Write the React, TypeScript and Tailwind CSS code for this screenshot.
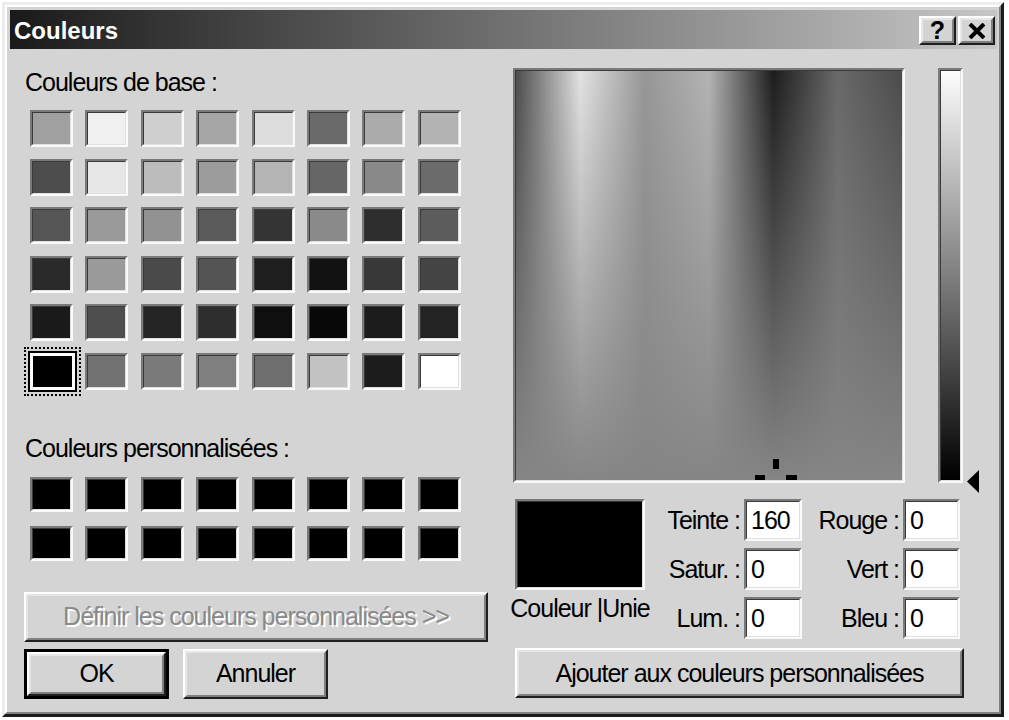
import type { ReactNode } from 'react'

const baseColors = [
  '#a0a0a0', '#f0f0f0', '#cfcfcf', '#a5a5a5', '#dcdcdc', '#6a6a6a', '#ababab', '#b3b3b3',
  '#4d4d4d', '#e6e6e6', '#bcbcbc', '#9c9c9c', '#b4b4b4', '#666666', '#898989', '#6b6b6b',
  '#555555', '#9a9a9a', '#929292', '#5a5a5a', '#343434', '#8a8a8a', '#2e2e2e', '#5c5c5c',
  '#2a2a2a', '#9a9a9a', '#4a4a4a', '#545454', '#1e1e1e', '#121212', '#383838', '#444444',
  '#1a1a1a', '#4e4e4e', '#252525', '#2e2e2e', '#0f0f0f', '#080808', '#1c1c1c', '#232323',
  '#000000', '#727272', '#7a7a7a', '#808080', '#6e6e6e', '#c2c2c2', '#1c1c1c', '#ffffff',
]

// bevel boxes, win95 style
function Raised({ className = '', children }: { className?: string; children?: ReactNode }) {
  return (
    <div className={`border-2 border-t-white border-l-white border-r-[#1e1e1e] border-b-[#1e1e1e] ${className}`}>
      <div className="flex h-full w-full items-center justify-center border-2 border-t-[#e6e6e6] border-l-[#e6e6e6] border-r-[#808080] border-b-[#808080] bg-[#d4d4d4]">
        {children}
      </div>
    </div>
  )
}

function Sunken({ className = '', children }: { className?: string; children?: ReactNode }) {
  return (
    <div className={`border-2 border-t-[#7a7a7a] border-l-[#7a7a7a] border-r-[#fafafa] border-b-[#fafafa] ${className}`}>
      <div className="h-full w-full border-[1px] border-t-[#3a3a3a] border-l-[#3a3a3a] border-r-[#e0e0e0] border-b-[#e0e0e0]">
        {children}
      </div>
    </div>
  )
}

function Swatch({ color, selected }: { color: string; selected?: boolean }) {
  if (selected) {
    return (
      <div className="relative h-full w-full">
        <div className="absolute -top-[6px] -bottom-[6px] -left-[6px] -right-[8px] border-2 border-dotted border-black" />
        <div className="absolute -top-[2px] -bottom-[2px] -left-[2px] -right-[4px] border-2 border-black bg-white p-[3px]">
          <div className="h-full w-full" style={{ backgroundColor: color }} />
        </div>
      </div>
    )
  }
  return (
    <Sunken className="h-full w-full">
      <div className="h-full w-full" style={{ backgroundColor: color }} />
    </Sunken>
  )
}

const label = 'text-[25px] leading-[29px] tracking-[-1px] text-black whitespace-nowrap'

function Field({ name, value }: { name: string; value: string }) {
  return (
    <>
      <div className={`flex items-center justify-end pr-[4px] ${label}`}>{name}</div>
      <Sunken className="h-full w-full">
        <div className={`flex h-full items-center bg-white pl-[4px] ${label}`}>{value}</div>
      </Sunken>
    </>
  )
}

export default function App() {
  return (
    <div className="h-[720px] w-[1009px] bg-white pl-[2px] pt-[2px] font-['Liberation_Sans',Arial,sans-serif]">
      <div className="h-[715px] w-[1002px] border-[3px] border-t-[#ececec] border-l-[#ececec] border-r-[#1a1a1a] border-b-[#1a1a1a]">
        <div className="h-full border-2 border-t-white border-l-white border-r-[#808080] border-b-[#808080] bg-[#d4d4d4] pl-[3px] pr-[2px] pt-[3px]">
          {/* title bar */}
          <div className="flex h-[39px] items-center justify-between bg-[linear-gradient(to_right,#1a1a1a,#c6c6c6)] pl-[4px] pr-[2px]">
            <span className="pt-[2px] text-[24px] leading-[28px] font-bold text-white">Couleurs</span>
            <div className="mt-[2px] flex gap-[2px]">
              <Raised className="h-[29px] w-[37px]">
                <span className="text-[25px] leading-none font-bold text-black">?</span>
              </Raised>
              <Raised className="h-[29px] w-[37px]">
                <svg width="18" height="16" viewBox="0 0 18 16">
                  <path d="M2 1 L16 15 M16 1 L2 15" stroke="#000" strokeWidth="4" />
                </svg>
              </Raised>
            </div>
          </div>

          <div className="flex gap-[25px] pl-[14px] pt-[19px]">
            {/* left column */}
            <div className="flex w-[464px] flex-col">
              <div className={`ml-[1px] ${label}`}>Couleurs de base :</div>
              <div className="ml-[6px] mt-[13px] grid grid-cols-[repeat(8,43px)] grid-rows-[repeat(6,37px)] gap-x-[12.4px] gap-y-[11.6px]">
                {baseColors.map((c, i) => (
                  <Swatch key={i} color={c} selected={i === 40} />
                ))}
              </div>
              <div className={`ml-[1px] mt-[44px] ${label}`}>Couleurs personnalisées :</div>
              <div className="ml-[6px] mt-[14px] grid grid-cols-[repeat(8,43px)] grid-rows-[repeat(2,35px)] gap-x-[12.4px] gap-y-[14px]">
                {Array.from({ length: 16 }).map((_, i) => (
                  <Swatch key={i} color="#000000" />
                ))}
              </div>
              <Raised className="mt-[31px] h-[50px] w-[464px]">
                <span className={`${label} text-[#8a8a8a]! [text-shadow:2px_2px_0_#ffffff]`}>
                  Définir les couleurs personnalisées &gt;&gt;
                </span>
              </Raised>
              <div className="mt-[7px] flex gap-[14px]">
                <div className="h-[50px] w-[145px] border-[3px] border-black">
                  <Raised className="h-full w-full">
                    <span className={label}>OK</span>
                  </Raised>
                </div>
                <Raised className="h-[50px] w-[145px]">
                  <span className={label}>Annuler</span>
                </Raised>
              </div>
            </div>

            {/* right column */}
            <div className="flex w-[466px] flex-col">
              <div className="flex h-[415px]">
                <Sunken className="h-full w-[392px]">
                  <div className="relative h-full w-full overflow-hidden bg-[linear-gradient(to_bottom,transparent,#858585),linear-gradient(to_right,#4c4c4c_0%,#e2e2e2_16.7%,#969696_33.3%,#b3b3b3_50%,#1d1d1d_66.7%,#696969_83.3%,#4c4c4c_100%)]">
                    {/* crosshair cursor */}
                    <div className="absolute left-[257px] top-[388px] h-[10px] w-[6px] bg-black" />
                    <div className="absolute left-[239px] top-[404px] h-[5px] w-[10px] bg-black" />
                    <div className="absolute left-[270px] top-[404px] h-[5px] w-[11px] bg-black" />
                  </div>
                </Sunken>
                <div className="relative ml-[33px] h-full w-[25px]">
                  <Sunken className="h-full w-full">
                    <div className="h-full w-full bg-[linear-gradient(to_bottom,#fdfdfd,#000000)]" />
                  </Sunken>
                  <svg className="absolute left-[29px] top-[402px]" width="12" height="23" viewBox="0 0 12 23">
                    <path d="M0 11.5 L12 0 L12 23 Z" fill="#000" />
                  </svg>
                </div>
              </div>

              <div className="mt-[16px] flex">
                <div className="ml-[2px] flex w-[130px] flex-col items-center">
                  <Sunken className="h-[91px] w-[130px]">
                    <div className="h-full w-full bg-black" />
                  </Sunken>
                  <div className={`mt-[4px] ${label}`}>Couleur |Unie</div>
                </div>
                <div className="grid grid-cols-[99px_58px_101px_57px] grid-rows-[repeat(3,42px)] gap-y-[7px]">
                  <Field name="Teinte :" value="160" />
                  <Field name="Rouge :" value="0" />
                  <Field name="Satur. :" value="0" />
                  <Field name="Vert :" value="0" />
                  <Field name="Lum. :" value="0" />
                  <Field name="Bleu :" value="0" />
                </div>
              </div>

              <Raised className="ml-[2px] mt-[9px] h-[50px] w-[449px]">
                <span className={label}>Ajouter aux couleurs personnalisées</span>
              </Raised>
            </div>
          </div>
        </div>
      </div>
    </div>
  )
}
